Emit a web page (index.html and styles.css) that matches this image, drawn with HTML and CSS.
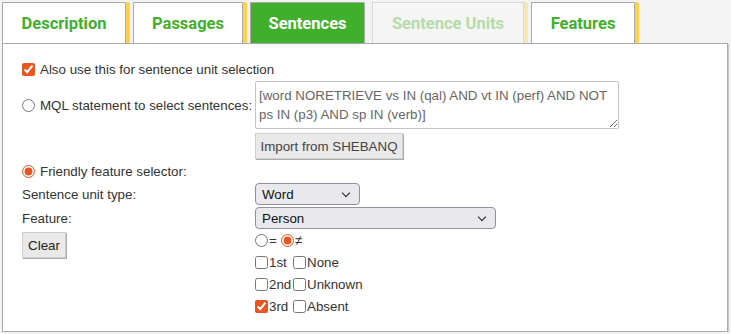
FILE: index.html
```html
<!DOCTYPE html>
<html>
<head>
<meta charset="utf-8">
<link rel="stylesheet" href="styles.css">
</head>
<body>
<div class="tabs">
  <div class="tab">Description</div>
  <div class="tab">Passages</div>
  <div class="tab active">Sentences</div>
  <div class="tab disabled">Sentence Units</div>
  <div class="tab">Features</div>
</div>
<div class="panel">
  <label class="line first"><input type="checkbox" class="box" checked><span>Also use this for sentence unit selection</span></label>
  <div class="grid">
    <label class="line mql"><input type="radio" name="mode" class="rad"><span>MQL statement to select sentences:</span></label>
    <textarea class="mqltext">[word NORETRIEVE vs IN (qal) AND vt IN (perf) AND NOT ps IN (p3) AND sp IN (verb)]</textarea>
    <div></div>
    <div class="val"><button class="btn import">Import from SHEBANQ</button></div>
  </div>
  <label class="line friendly"><input type="radio" name="mode" class="rad" checked><span>Friendly feature selector:</span></label>
  <div class="grid sel">
    <div class="lbl">Sentence unit type:</div>
    <div class="val"><div class="select short">Word</div></div>
    <div class="lbl">Feature:</div>
    <div class="val"><div class="select long">Person</div></div>
    <div class="lbl top"><button class="btn clear">Clear</button></div>
    <div class="val">
      <div class="ops">
        <input type="radio" name="op" class="rad op"><span class="eq">=</span>
        <input type="radio" name="op" class="rad op" checked><span>≠</span>
      </div>
      <div class="vals">
        <label class="opt"><input type="checkbox" class="box">1st</label>
        <label class="opt"><input type="checkbox" class="box">None</label>
        <label class="opt"><input type="checkbox" class="box">2nd</label>
        <label class="opt"><input type="checkbox" class="box">Unknown</label>
        <label class="opt"><input type="checkbox" class="box" checked>3rd</label>
        <label class="opt"><input type="checkbox" class="box">Absent</label>
      </div>
    </div>
  </div>
</div>
</body>
</html>
```
FILE: styles.css
```css
html, body {
  margin: 0;
  padding: 0;
  background: #f3f3f3;
}
body {
  padding: 2px 4px 0 2px;
  font-family: "Liberation Sans", Arial, sans-serif;
  font-size: 13.33px;
  color: #333;
}
.tabs {
  display: flex;
  gap: 7px;
  height: 41px;
}
.tab {
  box-sizing: border-box;
  height: 41px;
  border: 1px solid #aaa;
  border-bottom: none;
  background: #fff;
  color: #3fb02c;
  font-family: Roboto, "Open Sans", sans-serif;
  font-weight: 700;
  font-size: 16.5px;
  display: flex;
  align-items: center;
  justify-content: center;
  box-shadow: 4px 0 0 #ffd24a;
  border-top-right-radius: 2px;
  position: relative;
  z-index: 1;
}
.tab:nth-child(1) { width: 124px; }
.tab:nth-child(2) { width: 110px; }
.tab:nth-child(3) { width: 115px; }
.tab:nth-child(4) { width: 152px; }
.tab:nth-child(5) { width: 104px; }
.tab.active {
  background: #40b02c;
  color: #fff;
  box-shadow: none;
}
.tab.disabled {
  background: #f5f5f5;
  border-color: #d8d8d8;
  color: #b3dcaa;
  box-shadow: 4px 0 0 #f7e7b4;
}
.panel {
  box-sizing: border-box;
  width: 726px;
  height: 289px;
  background: #fff;
  border: 1px solid #aaa;
  box-shadow: 1px 1px 0 #c8c8c8;
  padding: 15px 10px 0 19px;
}
.line {
  display: flex;
  align-items: center;
  height: 20px;
}
.box {
  width: 13px;
  height: 13px;
  margin: 0 5px 0 0;
  accent-color: #e95420;
}
.rad {
  width: 13px;
  height: 13px;
  margin: 0 5px 0 0;
  accent-color: #e95420;
}
.grid {
  display: grid;
  grid-template-columns: 233px auto;
  margin-top: 2px;
}
.mql {
  height: auto;
}
.val {
  display: flex;
  flex-direction: column;
  align-items: flex-start;
}
.mqltext {
  box-sizing: border-box;
  width: 364px;
  height: 48px;
  margin: 0;
  padding: 4px 3px;
  border: 1px solid #c4c4c4;
  border-radius: 2px;
  font-family: "Liberation Sans", Arial, sans-serif;
  font-size: 13.33px;
  line-height: 19px;
  color: #666;
  resize: vertical;
  overflow: hidden;
}
.btn {
  box-sizing: border-box;
  height: 26px;
  margin: 0;
  padding: 0 4px;
  white-space: nowrap;
  background: #e9e9e9;
  border: 1px solid #cfcfcf;
  box-shadow: 1px 1px 0 #aaa;
  font-family: "Liberation Sans", Arial, sans-serif;
  font-size: 13.33px;
  color: #444;
}
.import {
  width: 148px;
  margin-top: 4px;
}
.friendly {
  margin-top: 2px;
}
.sel {
  margin-top: 2px;
  row-gap: 2px;
}
.lbl {
  display: flex;
  align-items: center;
  height: 22px;
}
.lbl.top {
  align-items: flex-start;
  height: auto;
}
.select {
  box-sizing: border-box;
  height: 22px;
  border: 1px solid #8f8f9d;
  border-radius: 4px;
  background: #e9e9ed;
  color: #111;
  padding: 0 0 0 6px;
  display: flex;
  align-items: center;
  position: relative;
}
.select::after {
  content: "";
  position: absolute;
  right: 10px;
  top: 6px;
  width: 5px;
  height: 5px;
  border-right: 1.5px solid #222;
  border-bottom: 1.5px solid #222;
  transform: rotate(45deg);
}
.short { width: 105px; }
.long { width: 241px; }
.clear {
  width: 44px;
  margin-top: 1px;
  color: #222;
}
.ops {
  display: flex;
  align-items: center;
  height: 18px;
  margin-top: 0;
}
.op {
  margin-right: 1px;
}
.ops span {
  color: #333;
}
.ops .eq {
  width: 12px;
}
.vals {
  display: grid;
  grid-template-columns: 38px auto;
  margin-top: 2px;
}
.opt {
  display: flex;
  align-items: center;
  height: 22px;
  color: #333;
}
.opt .box {
  margin-right: 1px;
}
```
